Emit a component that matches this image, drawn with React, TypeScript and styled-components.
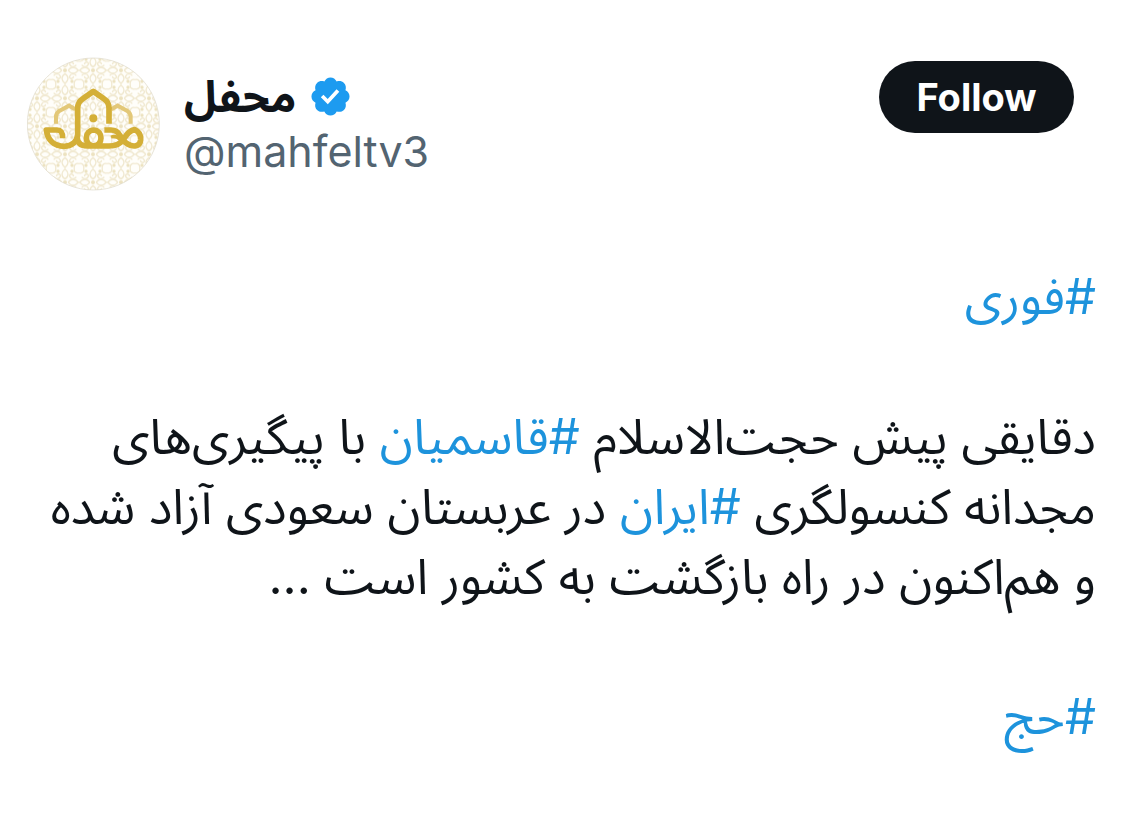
import React from "react";
import styled, { createGlobalStyle } from "styled-components";

const GlobalStyle = createGlobalStyle`
  * { box-sizing: border-box; }
  body {
    margin: 0;
    background: #ffffff;
    color: #0f1419;
    font-family: Inter, "Noto Sans Arabic", "DejaVu Sans", sans-serif;
  }
`;

const Post = styled.article`
  padding: 57px 29px 48px 27px;
`;

const Header = styled.header`
  display: flex;
  align-items: flex-start;
  gap: 24px;
`;

const AvatarLink = styled.a`
  display: block;
  flex: none;
  width: 133px;
  height: 134px;
`;

const Identity = styled.div`
  flex: 1;
  display: flex;
  flex-direction: column;
  padding-top: 12px;
`;

const NameRow = styled.div`
  display: flex;
  align-items: center;
  gap: 15px;
  height: 55px;
`;

const Name = styled.a`
  color: #0f1419;
  font-size: 44px;
  font-weight: 700;
  line-height: 55px;
  text-decoration: none;
`;

const Handle = styled.a`
  align-self: flex-start;
  color: #536471;
  font-size: 43px;
  line-height: 55px;
  text-decoration: none;
`;

const FollowButton = styled.button`
  margin: 4px 22px 0 0;
  width: 195px;
  height: 72px;
  border: 0;
  border-radius: 36px;
  background: #0f1419;
  color: #ffffff;
  font-family: Inter, sans-serif;
  font-size: 38px;
  font-weight: 700;
  line-height: 72px;
  padding: 0;
`;

const Body = styled.div`
  margin-top: 71px;
  display: flex;
  flex-direction: column;
  gap: 70px;
  font-size: 49px;
  line-height: 70px;
`;

const Paragraph = styled.p`
  margin: 0;
  white-space: nowrap;
`;

const Hashtag = styled.a`
  color: #1d93dc;
  text-decoration: none;
`;

const Avatar = () => (
  <svg viewBox="22 22 399 402" width="133" height="134" role="img" aria-label="محفل">
    <defs>
      <pattern id="floral" x="10" y="20" width="84" height="84" patternUnits="userSpaceOnUse">
        <g fill="none" stroke="#f0e8cf" strokeWidth="4">
          <path d="M42 2c12 10 12 22 0 30c-12-8-12-20 0-30zM42 82c12-10 12-22 0-30c-12 8-12 20 0 30z" />
          <path d="M2 42c10-12 22-12 30 0c-8 12-20 12-30 0zM82 42c-10-12-22-12-30 0c8 12 20 12 30 0z" />
          <path d="M0 14c10 2 16-4 14-14M70 0c-2 10 4 16 14 14M84 70c-10-2-16 4-14 14M14 84c2-10-4-16-14-14" />
          <path d="M16 24c2-10 14-8 12 0s-14 10-20 2M68 24c-2-10-14-8-12 0s14 10 20 2M16 60c2 10 14 8 12 0s-14-10-20-2M68 60c-2 10-14 8-12 0s14-10 20-2" />
        </g>
        <g fill="#ece2c0">
          <circle cx="42" cy="42" r="6" />
          <circle cx="21" cy="9" r="5" />
          <circle cx="63" cy="75" r="5" />
          <circle cx="63" cy="9" r="5" />
          <circle cx="21" cy="75" r="5" />
        </g>
      </pattern>
    </defs>
    <circle cx="221" cy="223" r="198" fill="#fffefa" />
    <circle cx="221" cy="223" r="198" fill="url(#floral)" stroke="#dcd8c9" strokeWidth="2" />
    <g fill="none" stroke="#e3c878" strokeWidth="12">
      <path d="M109 222V202Q109 190 119 184L148 168L167 179" />
      <path d="M333 222V202Q333 190 323 184L294 168L275 179" />
    </g>
    <g fill="none" stroke="#d4af37" strokeWidth="17" strokeLinejoin="round">
      <path d="M268 222V176Q268 157 252 147L221 125L190 147Q174 157 174 176V254C174 275 157 290 134 290C101 290 84 270 80 241H112C125 241 129 249 129 266" />
      <path d="M172 262C174 281 184 289 202 289H220C252 289 251 242 222 241C193 242 192 289 224 289H268C292 289 304 281 313 267C322 252 331 242 345 240C358 246 364 258 363 271C361 291 341 293 324 283C314 277 307 268 300 256C294 245 285 241 274 241H254" />
      <path d="M274 262C286 258 296 262 303 272" strokeWidth="10" />
    </g>
    <circle cx="221" cy="206" r="12" fill="#d4af37" />
  </svg>
);

const VerifiedBadge = () => (
  <svg viewBox="1.500 1.500 21 21" width="39" height="39" role="img" aria-label="Verified account">
    <path
      fill="#1d9bf0"
      d="M22.250 12c0-1.430-.88-2.670-2.190-3.340.46-1.390.2-2.900-.81-3.910s-2.520-1.270-3.910-.81c-.66-1.310-1.910-2.190-3.340-2.190s-2.670.88-3.330 2.190c-1.400-.46-2.910-.2-3.920.81s-1.260 2.520-.8 3.910c-1.310.67-2.200 1.910-2.200 3.340s.89 2.670 2.200 3.340c-.46 1.390-.21 2.900.8 3.910s2.520 1.260 3.910.81c.67 1.310 1.910 2.190 3.340 2.190s2.680-.88 3.340-2.190c1.390.45 2.900.2 3.910-.81s1.270-2.520.81-3.910c1.310-.67 2.190-1.910 2.190-3.340zm-11.710 4.200L6.800 12.460l1.410-1.420 2.260 2.260 4.800-5.230 1.470 1.360-6.200 6.770z"
    />
  </svg>
);

export default function App() {
  return (
    <>
      <GlobalStyle />
      <Post>
        <Header>
          <AvatarLink href="#profile">
            <Avatar />
          </AvatarLink>
          <Identity>
            <NameRow>
              <Name href="#profile" lang="fa">محفل</Name>
              <VerifiedBadge />
            </NameRow>
            <Handle href="#profile">@mahfeltv3</Handle>
          </Identity>
          <FollowButton type="button">Follow</FollowButton>
        </Header>
        <Body dir="rtl" lang="fa">
          <Paragraph>
            <Hashtag href="#urgent">#فوری</Hashtag>
          </Paragraph>
          <Paragraph>
            دقایقی پیش حجت‌الاسلام <Hashtag href="#qasemian">#قاسمیان</Hashtag> با پیگیری‌های
            <br />
            مجدانه کنسولگری <Hashtag href="#iran">#ایران</Hashtag> در عربستان سعودی آزاد شده
            <br />
            و هم‌اکنون در راه بازگشت به کشور است ...
          </Paragraph>
          <Paragraph>
            <Hashtag href="#hajj">#حج</Hashtag>
          </Paragraph>
        </Body>
      </Post>
    </>
  );
}
